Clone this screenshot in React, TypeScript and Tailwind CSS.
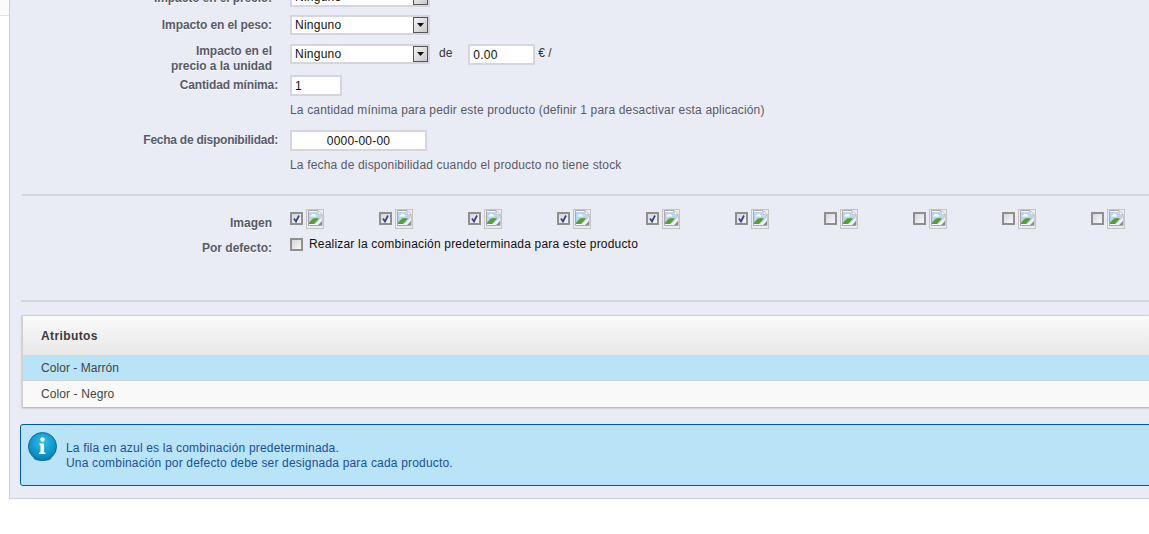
import React from 'react';

const arrowBtn = (
  <span className="w-[15px] h-[16px] bg-gradient-to-br from-[#f4f4f4] to-[#c9c9c9] border border-[#555] flex items-center justify-center">
    <svg width="7" height="4" viewBox="0 0 7 4">
      <path d="M0 0h7L3.500 4z" fill="#111" />
    </svg>
  </span>
);

const FakeSelect: React.FC = () => (
  <div className="w-[140px] h-[20px] bg-white border-2 border-[#d5d6dd] flex items-center justify-between pl-[3px] text-[12px] tracking-[0.25px] text-[#111]">
    <span>Ninguno</span>
    {arrowBtn}
  </div>
);

// chrome's broken image glyph
const BrokenImage: React.FC = () => (
  <span className="block w-[18px] h-[20px] border border-[#c4c4c4]">
    <svg width="16" height="16" viewBox="0 0 16 16">
      <path d="M1.500 0.500h9.500l4 4v11h-13.500z" fill="#fff" stroke="#a9a9a9" />
      <path d="M11 1v4h4" fill="#fff" stroke="#a9a9a9" />
      <path d="M2 2h8.500v3.500H14V11L8 14H2z" fill="#b9d3f5" />
      <path d="M4 5h1V4h3v1h1v1.500H3z" fill="#fff" />
      <path d="M2 14v-1.500L6 8.500l3-.5 3 .5L7 14z" fill="#56a02e" />
      <path d="M7 15l8-7.500v2.500L10 15z" fill="#f2f4f8" />
      <path d="M11 15l4-4v4z" fill="#8c8c8c" />
    </svg>
  </span>
);

const Checkbox: React.FC<{ checked?: boolean }> = ({ checked }) => (
  <span className="block w-[13px] h-[13px] border-2 border-[#8e8f8f] bg-gradient-to-br from-[#d6d6dc] to-[#f8f8f8]">
    {checked && (
      <svg width="9" height="9" viewBox="0 0 9 9">
        <path d="M2 4.500l2 3 3-6" fill="none" stroke="#35478c" strokeWidth="1.800" />
      </svg>
    )}
  </span>
);

const labelCls = 'font-bold text-[12px] leading-[15px] text-[#585a69] text-right shrink-0 [text-shadow:0_1px_0_#fff]';
const helpCls = 'text-[12px] leading-[15px] tracking-[0.165px] text-[#585a69] pl-[280px]';
const imageChecks = [true, true, true, true, true, true, false, false, false, false];

export default function App() {
  return (
    <div className="w-[1149px] h-[534px] overflow-hidden bg-white flex font-['Liberation_Sans',Arial,sans-serif]">
      <div className="w-[9px] shrink-0">
        <div className="h-[16px] bg-[#fbfbfb] border-b border-[#e4e4e4]" />
      </div>
      <div className="w-[1160px] shrink-0 h-[499px] bg-[#e9ecf4] border-l border-b border-[#ccced7]">
        <div className="-mt-[13px]">
          {/* prices */}
          <div className="flex items-center h-[20px]">
            <div className={`${labelCls} w-[262px] pt-[2px] tracking-[-0.1px]`}>Impacto en el precio:</div>
            <div className="ml-[18px]"><FakeSelect /></div>
          </div>
          <div className="flex items-center h-[20px] mt-[8px]">
            <div className={`${labelCls} w-[262px] tracking-[-0.1px]`}>Impacto en el peso:</div>
            <div className="ml-[18px]"><FakeSelect /></div>
          </div>
          <div className="flex mt-[9px] h-[31px]">
            <div className={`${labelCls} w-[262px] tracking-[-0.05px]`}>
              Impacto en el<br />precio a la unidad
            </div>
            <div className="ml-[18px] flex items-start">
              <FakeSelect />
              <span className="ml-[9px] mt-[1px] text-[12px] leading-[16px] text-[#333]">de</span>
              <input
                readOnly
                value="0.00"
                className="ml-[16px] w-[67px] h-[21px] bg-white border-2 border-[#d5d6dd] px-[3px] text-[12px] tracking-[0.2px] text-[#111] outline-none"
              />
              <span className="ml-[3px] mt-px text-[12px] leading-[16px] text-[#333]">€ /</span>
            </div>
          </div>

          {/* quantity */}
          <div className="flex items-start">
            <div className={`${labelCls} w-[268px] pt-[3px] tracking-[-0.15px]`}>Cantidad mínima:</div>
            <input
              readOnly
              value="1"
              className="ml-[12px] w-[52px] h-[21px] bg-white border-2 border-[#d5d6dd] px-[3px] text-[12px] text-[#111] outline-none"
            />
          </div>
          <p className={`${helpCls} mt-[7px]`}>
            La cantidad mínima para pedir este producto (definir 1 para desactivar esta aplicación)
          </p>

          <div className="flex items-start mt-[12px]">
            <div className={`${labelCls} w-[268px] pt-[3px] tracking-[-0.25px]`}>Fecha de disponibilidad:</div>
            <input
              readOnly
              value="0000-00-00"
              className="ml-[12px] w-[137px] h-[21px] bg-white border-2 border-[#d5d6dd] text-center text-[12px] tracking-[0.2px] text-[#111] outline-none"
            />
          </div>
          <p className={`${helpCls} mt-[7px]`}>
            La fecha de disponibilidad cuando el producto no tiene stock
          </p>
        </div>

        <div className="h-[2px] bg-[#d5d6dc] ml-[12px] mt-[21px]" />

        {/* images */}
        <div className="flex mt-[13px] h-[20px]">
          <div className={`${labelCls} w-[262px] pt-[7px]`}>Imagen</div>
          <div className="ml-[18px] flex">
            {imageChecks.map((checked, i) => (
              <div key={i} className="w-[89px] shrink-0 flex gap-[3px] items-start pt-[3px]">
                <Checkbox checked={checked} />
                <span className="block -mt-[3px]"><BrokenImage /></span>
              </div>
            ))}
          </div>
        </div>
        <div className="flex mt-[8px] h-[16px]">
          <div className={`${labelCls} w-[262px] pt-[4px]`}>Por defecto:</div>
          <div className="ml-[18px] flex gap-[6px] items-start pt-px">
            <Checkbox />
            <span className="text-[12px] leading-[13px] tracking-[0.19px] text-[#111]">Realizar la combinación predeterminada para este producto</span>
          </div>
        </div>

        <div className="h-[2px] bg-[#d5d6dc] ml-[11px] mt-[47px]" />

        {/* attributes table */}
        <div className="ml-[12px] mt-[13px] border-t border-l border-[#d0d0d0] shadow-[0_1px_2px_rgba(0,0,0,0.3)]">
          <div className="h-[39px] bg-gradient-to-b from-[#fafafa] to-[#e8e8e8] flex items-center pl-[18px] text-[12px] font-bold tracking-[0.4px] text-[#3a3a3a]">
            Atributos
          </div>
          <div className="h-[26px] bg-[#b9e3f7] border-b border-[#d0d0d0] flex items-center pl-[18px] text-[12px] tracking-[0.05px] text-[#444]">
            Color - Marrón
          </div>
          <div className="h-[26px] bg-[#f9f9f9] flex items-center pl-[18px] text-[12px] tracking-[0.1px] text-[#444]">
            Color - Negro
          </div>
        </div>

        {/* info */}
        <div className="ml-[10px] mt-[17px] h-[62px] bg-[#b9e3f7] border border-[#0058a8] rounded-[3px] flex">
          <svg className="ml-[7px] mt-[7px] shrink-0" width="29" height="30" viewBox="0 0 29 30">
            <defs>
              <radialGradient id="infoBlue" cx="50%" cy="35%" r="65%">
                <stop offset="0%" stopColor="#2fc1ea" />
                <stop offset="100%" stopColor="#0280b8" />
              </radialGradient>
            </defs>
            <ellipse cx="14.500" cy="26.500" rx="9" ry="2.500" fill="#6d8a96" />
            <circle cx="14.500" cy="14.500" r="14" fill="url(#infoBlue)" stroke="#0a6f96" />
            <circle cx="14.500" cy="7.500" r="2.200" fill="#fff" />
            <path d="M11.500 11.500h4.500v9h1.500V22h-6.500v-1.500h1.500v-7.500h-1z" fill="#fff" />
          </svg>
          <p className="ml-[9px] mt-[16px] text-[12px] leading-[15px] tracking-[0.18px] text-[#1a4f9c]">
            La fila en azul es la combinación predeterminada.<br />
            Una combinación por defecto debe ser designada para cada producto.
          </p>
        </div>
      </div>
    </div>
  );
}
